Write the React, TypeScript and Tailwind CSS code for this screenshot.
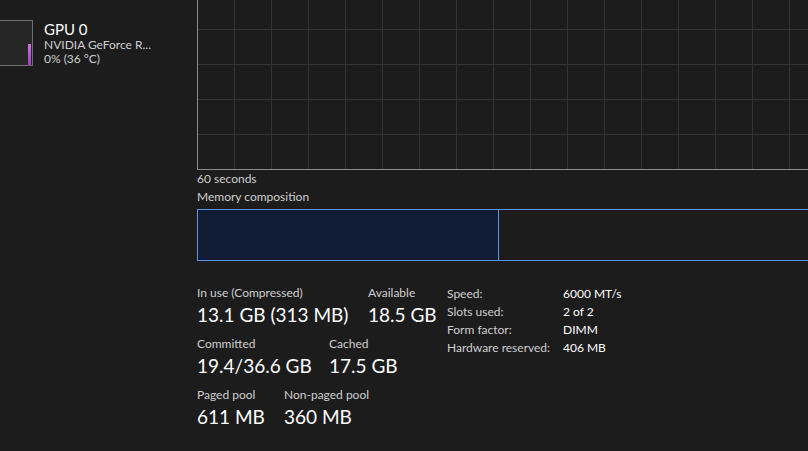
import React from 'react';

const FONT = "font-['Lato','Noto_Sans',sans-serif]";

const Stat = ({ label, value, w }: { label: string; value: string; w?: string }) => (
  <div className={`flex flex-col ${w ?? ''}`}>
    <span className="text-[12px] leading-[16px] text-[#cfcfcf]">{label}</span>
    <span className="text-[19px] leading-[28px] text-white">{value}</span>
  </div>
);

const SPECS: [string, string][] = [
  ['Speed:', '6000 MT/s'],
  ['Slots used:', '2 of 2'],
  ['Form factor:', 'DIMM'],
  ['Hardware reserved:', '406 MB'],
];

export default function App() {
  return (
    <div className={`flex w-[808px] h-[451px] overflow-hidden bg-[#1c1c1c] ${FONT}`}>
      {/* sidebar */}
      <div className="w-[197px] shrink-0 pt-[20px]">
        <div className="flex gap-[11px]">
          <div className="relative w-[33px] h-[46px] border border-l-0 border-[#6f6f6f] bg-[#262626]">
            <div className="absolute right-[1px] bottom-0 w-[3px] h-[21px] bg-gradient-to-b from-[#d070e0] to-[#a040c0]" />
          </div>
          <div className="flex flex-col">
            <span className="text-[15px] leading-[18px] text-white">GPU 0</span>
            <span className="text-[12px] leading-[14px] text-[#cfcfcf]">NVIDIA GeForce R...</span>
            <span className="text-[12px] leading-[14px] text-[#cfcfcf]">0% (36 °C)</span>
          </div>
        </div>
      </div>

      {/* main */}
      <div className="flex-1 flex flex-col min-w-0">
        <div className="-mt-[5px] h-[175px] w-[700px] shrink-0 border-l border-b border-[#8a8a8a] bg-[linear-gradient(to_right,#343434_1px,transparent_1px),linear-gradient(to_bottom,#343434_1px,transparent_1px)] bg-[size:37px_35px] bg-[position:36px_34px]" />
        <span className="mt-[1px] text-[12px] leading-[16px] text-[#cfcfcf]">60 seconds</span>
        <span className="mt-[2px] text-[12px] leading-[16px] text-[#cfcfcf]">Memory composition</span>
        <div className="mt-[4px] flex h-[52px] w-[700px] border border-[#5b94e8]">
          <div className="w-[301px] h-full bg-[#0f1c33] border-r border-[#5b94e8]" />
        </div>

        <div className="mt-[24px] flex">
          <div className="w-[250px] flex flex-col gap-[7px]">
            <div className="flex">
              <Stat label="In use (Compressed)" value="13.1 GB (313 MB)" w="w-[171px]" />
              <Stat label="Available" value="18.5 GB" />
            </div>
            <div className="flex">
              <Stat label="Committed" value="19.4/36.6 GB" w="w-[132px]" />
              <Stat label="Cached" value="17.5 GB" />
            </div>
            <div className="flex">
              <Stat label="Paged pool" value="611 MB" w="w-[87px]" />
              <Stat label="Non-paged pool" value="360 MB" />
            </div>
          </div>
          <div className="flex flex-col text-[12px] leading-[18px]">
            {SPECS.map(([k, v]) => (
              <div key={k} className="flex">
                <span className="w-[116px] text-[#cfcfcf]">{k}</span>
                <span className="text-white">{v}</span>
              </div>
            ))}
          </div>
        </div>
      </div>
    </div>
  );
}
